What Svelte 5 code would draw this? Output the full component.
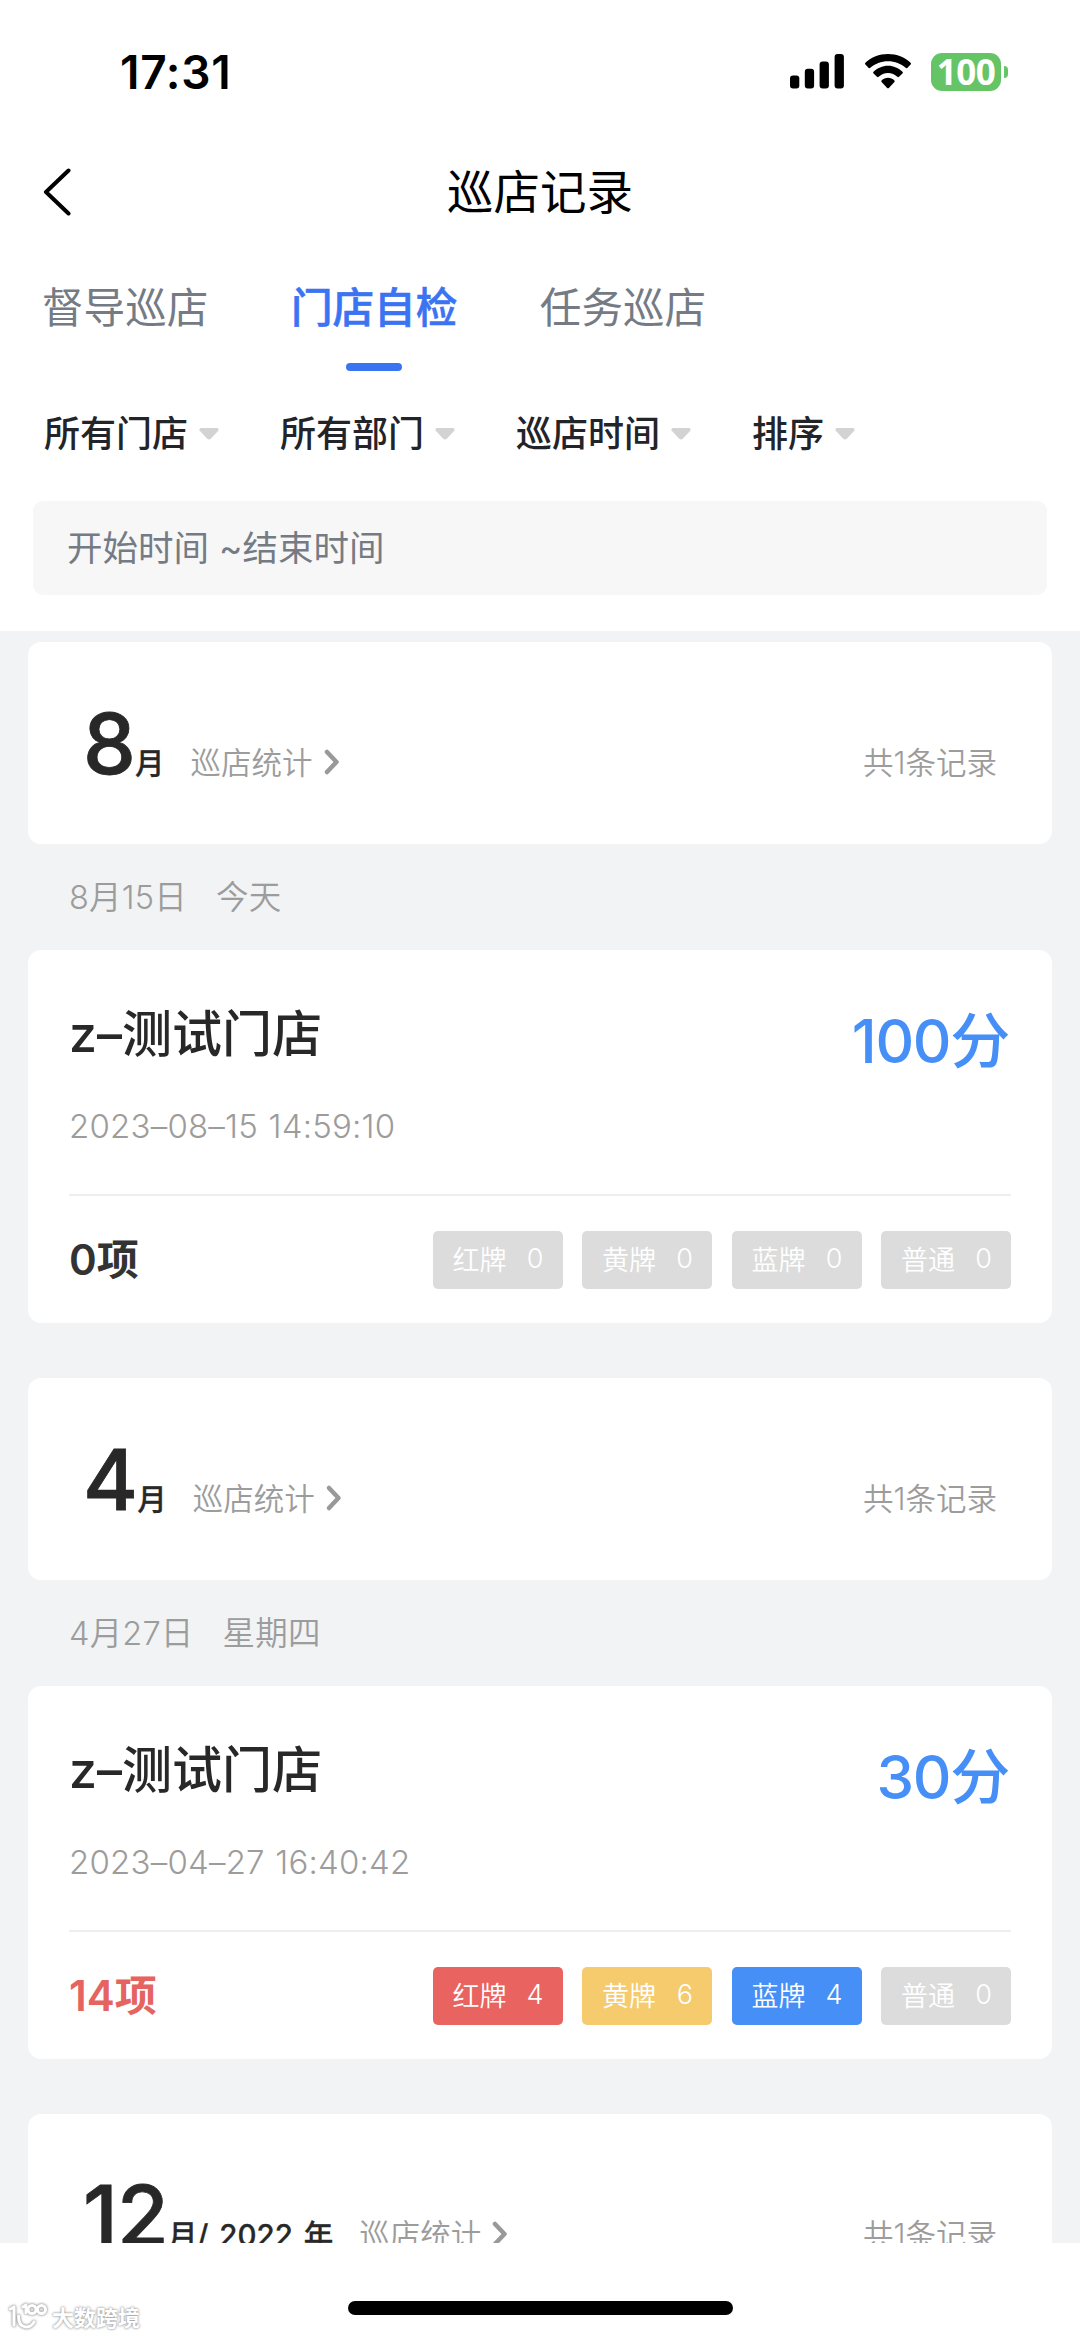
<script>
  const tabs = ["督导巡店", "门店自检", "任务巡店"];
  let activeTab = "门店自检";

  const filters = ["所有门店", "所有部门", "巡店时间", "排序"];

  // one group per month, newest first
  const months = [
    {
      month: 8,
      total: 1,
      date: "8月15日",
      day: "今天",
      record: {
        name: "z–测试门店",
        score: 100,
        time: "2023–08–15 14:59:10",
        items: 0,
        cards: [0, 0, 0, 0],
      },
    },
    {
      month: 4,
      total: 1,
      date: "4月27日",
      day: "星期四",
      record: {
        name: "z–测试门店",
        score: 30,
        time: "2023–04–27 16:40:42",
        items: 14,
        cards: [4, 6, 4, 0],
      },
    },
    { month: 12, year: 2022, total: 1 },
  ];

  const cardTypes = [
    { label: "红牌", color: "red" },
    { label: "黄牌", color: "yellow" },
    { label: "蓝牌", color: "blue" },
    { label: "普通", color: "normal" },
  ];
</script>

<div class="screen">
  <div class="status-bar">
    <span class="clock">17:31</span>
    <div class="status-icons">
      <svg class="signal" width="54" height="35" viewBox="0 0 54 35">
        <rect x="0" y="21.5" width="9.3" height="13" rx="3" />
        <rect x="14.8" y="14.8" width="9.3" height="19.7" rx="3" />
        <rect x="29.6" y="7.4" width="9.3" height="27.1" rx="3" />
        <rect x="44.6" y="0" width="9.3" height="34.5" rx="3" />
      </svg>
      <svg class="wifi" width="46" height="35" viewBox="0 0 46 35">
        <path d="M23 0C31.800 0 39.800 3.300 45.600 8.800Q46.400 9.700 45.600 10.600L42.300 13.900Q41.500 14.600 40.600 13.800C36 9.600 29.800 7.200 23 7.200S10 9.600 5.400 13.800Q4.500 14.600 3.700 13.900L.4 10.600Q-.4 9.700.4 8.800C6.200 3.300 14.200 0 23 0Z" />
        <path d="M23 11.800C28.600 11.800 33.700 14.200 37.500 17.700Q38.300 18.600 37.500 19.400L34 22.800Q33.200 23.500 32.300 22.800C29.800 20.500 26.600 19 23 19S16.200 20.500 13.700 22.800Q12.800 23.500 12 22.800L8.500 19.400Q7.700 18.600 8.500 17.700C12.300 14.200 17.400 11.800 23 11.800Z" />
        <path d="M23 23.800C25.500 23.800 27.700 24.900 29.400 26.400Q30.200 27.200 29.400 28L23.900 33.900Q23 34.700 22.100 33.900L16.600 28Q15.800 27.200 16.600 26.400C18.300 24.900 20.500 23.800 23 23.800Z" />
      </svg>
      <div class="battery"><span class="level">100</span><span class="nub"></span></div>
    </div>
  </div>

  <div class="nav-bar">
    <svg class="back" width="28" height="48" viewBox="0 0 28 48">
      <path d="M25.500 2.500L3 24L25.500 45.500" fill="none" stroke="#000" stroke-width="4" stroke-linecap="round" stroke-linejoin="round" />
    </svg>
    <h1>巡店记录</h1>
  </div>

  <div class="tabs">
    {#each tabs as tab}
      <button
        class={tab === activeTab ? "tab active" : "tab"}
        on:click={() => (activeTab = tab)}>{tab}</button
      >
    {/each}
  </div>

  <div class="filters">
    {#each filters as filter}
      <div class="filter">
        <span>{filter}</span>
        <svg width="20" height="12" viewBox="0 0 20 12">
          <path d="M2 0H18Q20 .4 19.500 2.500L12 10.600Q10 12.600 8 10.600L.5 2.500Q0 .4 2 0Z" fill="#d3d3d3" />
        </svg>
      </div>
    {/each}
  </div>

  <div class="date-range">开始时间 ~结束时间</div>

  <div class="list">
    {#each months as group}
      <div class="month-card">
        <span class="month">{group.month}</span>
        <span class="unit">月{#if group.year}/ {group.year} 年{/if}</span>
        <span class="stats">巡店统计</span>
        <svg class="arrow" width="16" height="25" viewBox="0 0 16 25">
          <path d="M3 3L12.500 13L3 23" fill="none" stroke="#999" stroke-width="4.500" stroke-linecap="round" stroke-linejoin="round" />
        </svg>
        <span class="total">共{group.total}条记录</span>
      </div>
      {#if group.record}
        <div class="day-row"><span>{group.date}</span><span>{group.day}</span></div>
        <div class="record">
          <div class="record-top">
            <span class="name">{group.record.name}</span>
            <span class="score">{group.record.score}分</span>
          </div>
          <div class="time">{group.record.time}</div>
          <div class="record-bottom">
            <span class={group.record.items ? "items warn" : "items"}>{group.record.items}项</span>
            <div class="badges">
              {#each cardTypes as type, i}
                <div class={group.record.cards[i] ? `badge ${type.color}` : "badge"}>
                  <span>{type.label}</span><span>{group.record.cards[i]}</span>
                </div>
              {/each}
            </div>
          </div>
        </div>
      {/if}
    {/each}
  </div>

  <div class="footer">
    <div class="watermark">
      <svg width="40" height="30" viewBox="0 0 40 30">
        <g fill="none" stroke-linecap="round" stroke-linejoin="round">
          <path d="M2.500 6L6 4V22M10.500 13C10.500 27 23 26 26 19M15 4L18 2V9.500" />
          <circle cx="24" cy="6.500" r="4" />
          <circle cx="33.500" cy="6.500" r="4" />
        </g>
      </svg>
      <span>大数跨境</span>
    </div>
    <div class="home-indicator"></div>
  </div>
</div>

<style>
  :global(body) {
    margin: 0;
    background: #fff;
  }

  .screen {
    display: flex;
    flex-direction: column;
    width: 1080px;
    height: 2337px;
    overflow: hidden;
    background: #fff;
    color: #282828;
    font-family: Inter, "Noto Sans CJK SC", sans-serif;
    white-space: nowrap;
  }

  .status-bar {
    display: flex;
    align-items: center;
    justify-content: space-between;
    height: 143px;
    padding: 0 72px 0 120px;
    box-sizing: border-box;
    color: #000;
  }

  .clock {
    font-size: 46px;
    font-weight: 600;
    letter-spacing: 0.7px;
  }

  .status-icons {
    display: flex;
    align-items: center;
  }

  .wifi {
    margin: 0 20px 0 21px;
  }

  .battery {
    display: flex;
    align-items: center;
  }

  .level {
    width: 70px;
    height: 38px;
    border-radius: 11px;
    background: #65c466;
    color: #fff;
    font-family: "Open Sans", "Noto Sans", sans-serif;
    font-size: 35px;
    font-weight: 700;
    line-height: 38px;
    letter-spacing: -0.5px;
    text-align: center;
  }

  .nub {
    width: 4px;
    height: 12px;
    margin-left: 3px;
    border-radius: 0 4px 4px 0;
    background: #65c466;
  }

  .nav-bar {
    display: grid;
    grid-template-columns: 1fr auto 1fr;
    align-items: center;
    height: 98px;
    padding: 0 43px;
    color: #000;
  }

  h1 {
    margin: 0;
    font-size: 46.500px;
    font-weight: 400;
    line-height: 58px;
  }

  .tabs {
    display: flex;
    gap: 82.500px;
    height: 130px;
    padding: 37px 0 0 42px;
    box-sizing: border-box;
  }

  .tab {
    display: flex;
    flex-direction: column;
    align-items: center;
    padding: 0;
    border: none;
    background: none;
    color: #757b85;
    font-family: inherit;
    font-size: 41.600px;
    line-height: 60px;
  }

  .tab.active {
    color: #3b74f2;
    font-weight: 500;
    -webkit-text-stroke: 0.6px #3b74f2;
  }

  .tab.active::after {
    content: "";
    width: 56px;
    height: 8px;
    margin-top: 25px;
    border-radius: 4px;
    background: #3b74f2;
  }

  .filters {
    display: flex;
    gap: 61px;
    height: 130px;
    padding: 38px 0 0 44px;
    box-sizing: border-box;
    color: #23242a;
    font-size: 36px;
    font-weight: 500;
    line-height: 50px;
  }

  .filter {
    display: flex;
    align-items: center;
    gap: 11px;
    height: 50px;
  }

  .date-range {
    height: 94px;
    margin: 0 33px 36px;
    padding-left: 34px;
    border-radius: 10px;
    background: #f7f7f7;
    color: #757b85;
    font-size: 35.500px;
    line-height: 96px;
  }

  .list {
    flex: none;
    height: 1611.500px;
    padding: 11px 28px 0;
    box-sizing: border-box;
    overflow: hidden;
    background: #f1f3f5;
  }

  .month-card {
    display: flex;
    align-items: baseline;
    height: 202px;
    padding: 47px 55px 0 55px;
    box-sizing: border-box;
    border-radius: 13px;
    background: #fff;
  }

  .month {
    font-size: 84px;
    font-weight: 500;
    line-height: 110px;
    letter-spacing: -0.8px;
    -webkit-text-stroke: 0.8px #282828;
  }

  .unit {
    font-size: 29.500px;
    font-weight: 500;
    word-spacing: 3px;
    -webkit-text-stroke: 0.3px #282828;
  }

  .stats {
    margin-left: 26px;
    color: #9c9c9c;
    font-size: 30.500px;
    font-weight: 350;
  }

  .arrow {
    margin-left: 11px;
    overflow: visible;
  }

  .total {
    margin-left: auto;
    color: #9c9c9c;
    font-size: 30.500px;
    font-weight: 350;
  }

  .day-row {
    display: flex;
    align-items: center;
    gap: 29px;
    height: 106px;
    padding: 0 0 6px 41px;
    box-sizing: border-box;
    color: #9c9c9c;
    font-size: 32.500px;
    font-weight: 350;
    letter-spacing: 0.2px;
  }

  .record {
    height: 373px;
    margin-bottom: 55px;
    padding: 0 41px;
    box-sizing: border-box;
    border-radius: 13px;
    background: #fff;
  }

  .record-top {
    display: flex;
    justify-content: space-between;
    padding-top: 44px;
    line-height: 80px;
  }

  .name {
    font-size: 50px;
    font-weight: 500;
  }

  .score {
    margin-top: 7px;
    padding-right: 2px;
    color: #458ff7;
    font-size: 60px;
    font-weight: 500;
    letter-spacing: -1.300px;
  }

  .time {
    height: 113px;
    padding-top: 11px;
    box-sizing: border-box;
    color: #9c9c9c;
    font-size: 33px;
    font-weight: 350;
    line-height: 68px;
    letter-spacing: 0.2px;
    word-spacing: 1px;
  }

  .record-bottom {
    display: flex;
    align-items: center;
    justify-content: space-between;
    height: 128px;
    border-top: 2px solid #eee;
  }

  .items {
    padding-bottom: 8px;
    color: #333;
    font-size: 42px;
    font-weight: 600;
  }

  .items.warn {
    color: #e5645f;
  }

  .badges {
    display: flex;
    gap: 19.500px;
  }

  .badge {
    display: flex;
    align-items: center;
    justify-content: space-between;
    width: 130px;
    height: 58px;
    padding: 0 19px 3px 20px;
    box-sizing: border-box;
    border-radius: 5px;
    background: #dcdcdc;
    color: #fff;
    font-size: 27px;
    font-weight: 350;
  }

  .badge.red {
    background: #e96460;
  }

  .badge.yellow {
    background: #f5cb6e;
  }

  .badge.blue {
    background: #458ff7;
  }

  .footer {
    position: relative;
    flex: 1;
  }

  .watermark {
    position: absolute;
    left: 8px;
    bottom: 3px;
    display: flex;
    align-items: center;
    gap: 4px;
    color: #fff;
    font-size: 22px;
    font-weight: 700;
    line-height: 32px;
    text-shadow: 0 0 2px #999, 0 0 3px #aaa;
  }

  .watermark svg {
    overflow: visible;
    stroke: #fff;
    stroke-width: 3;
    filter: drop-shadow(0 0 1px #999) drop-shadow(0 0 1px #bbb);
  }

  .home-indicator {
    width: 385px;
    height: 14px;
    margin: 58px auto 0;
    border-radius: 7px;
    background: #000;
  }
</style>
